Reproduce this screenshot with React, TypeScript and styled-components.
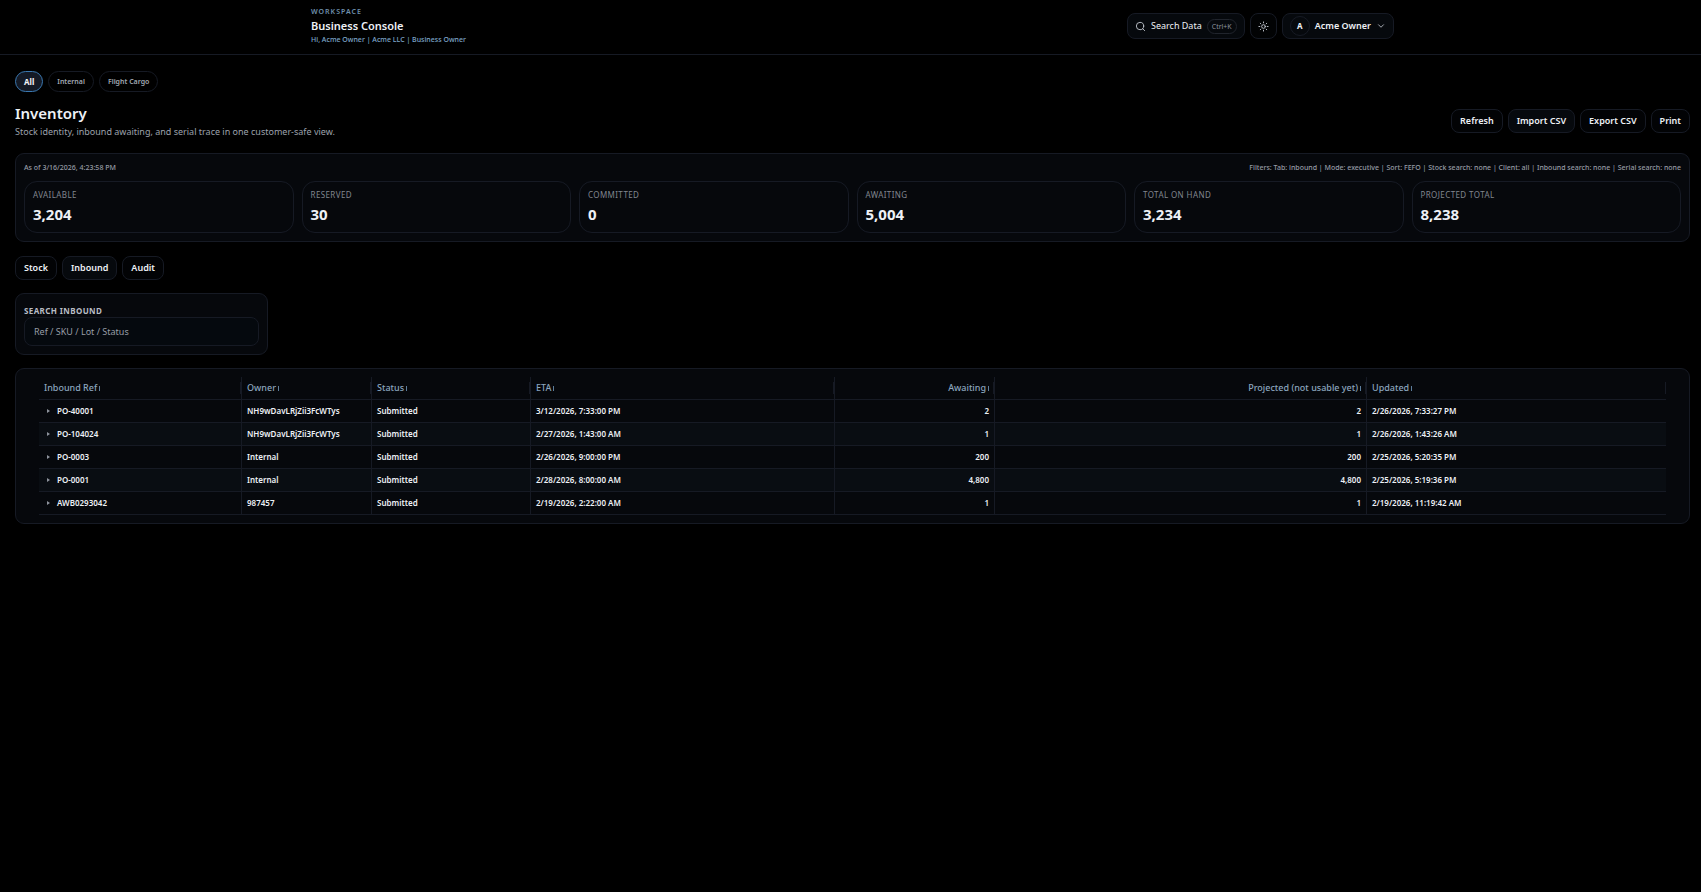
import React from "react";
import styled, { createGlobalStyle } from "styled-components";

const line = "#161a24";
const surface = "#06080c";

const GlobalStyle = createGlobalStyle`
  *, *::before, *::after { box-sizing: border-box; }
  body {
    margin: 0;
    background: #000;
    color: #eef1f6;
    font-family: "Noto Sans", sans-serif;
    font-size: 9px;
    line-height: 12px;
  }
  button, input { font: inherit; color: inherit; margin: 0; }
  h1, h2, p { margin: 0; }
`;

const Header = styled.header`
  padding: 0 0 0 4px;
  border-bottom: 1px solid ${line};
`;

const HeaderInner = styled.div`
  display: flex;
  align-items: center;
  justify-content: space-between;
  max-width: 1083px;
  height: 54px;
  margin: 0 auto;
  padding-bottom: 2px;
`;

const Eyebrow = styled.p`
  color: #6f90ad;
  font-size: 7px;
  font-weight: 600;
  letter-spacing: 1px;
  text-transform: uppercase;
`;

const ConsoleTitle = styled.h2`
  font-size: 11px;
  line-height: 16px;
  font-weight: 600;
`;

const Greeting = styled.p`
  color: #7da6ca;
  font-size: 7px;
  font-weight: 500;
`;

const HeaderTools = styled.div`
  display: flex;
  gap: 5px;
`;

const HeaderButton = styled.button<{ $plain?: boolean }>`
  display: flex;
  align-items: center;
  gap: 5px;
  min-width: 27px;
  height: 26px;
  padding: 0 7px;
  border: 1px solid ${line};
  border-radius: 8px;
  background: ${(p) => (p.$plain ? "#020304" : "#06090d")};
  justify-content: center;
`;

const Kbd = styled.kbd`
  padding: 0 4px;
  border: 1px solid #20242c;
  border-radius: 8px;
  color: #8b919b;
  font: inherit;
  font-size: 7px;
  line-height: 13px;
`;

const Avatar = styled.span`
  width: 20px;
  height: 20px;
  border: 1px solid ${line};
  border-radius: 50%;
  font-size: 8px;
  line-height: 18px;
  font-weight: 700;
`;

const UserName = styled.span`
  font-weight: 600;
`;

const Main = styled.main`
  display: flex;
  flex-direction: column;
  padding: 16px 11px 0 15px;
`;

const Chips = styled.nav`
  display: flex;
  gap: 5px;
`;

const Chip = styled.button<{ $active?: boolean }>`
  height: 21px;
  padding: 0 8px;
  border: 1px solid ${(p) => (p.$active ? "#3a78b0" : line)};
  border-radius: 11px;
  background: ${(p) => (p.$active ? "#141a26" : "#000")};
  color: ${(p) => (p.$active ? "#f2f4f8" : "#a2a8b2")};
  font-size: ${(p) => (p.$active ? "8px" : "7px")};
  line-height: 10px;
  font-weight: ${(p) => (p.$active ? 700 : 600)};
`;

const TitleRow = styled.div`
  display: flex;
  align-items: center;
  justify-content: space-between;
  margin: 10px 0 13px;
`;

const PageTitle = styled.h1`
  font-size: 15px;
  line-height: 22px;
  font-weight: 600;
`;

const Subtitle = styled.p`
  color: #9da2ac;
  line-height: 16px;
`;

const ButtonRow = styled.div`
  display: flex;
  gap: 5px;
`;

const Button = styled.button<{ $active?: boolean }>`
  height: 24px;
  padding: 0 8px;
  border: 1px solid ${line};
  border-radius: 8px;
  background: ${(p) => (p.$active ? "#06090d" : "#020305")};
  font-weight: 600;
`;

const Panel = styled.section`
  padding: 8px;
  border: 1px solid ${line};
  border-radius: 9px;
  background: ${surface};
`;

const SummaryMeta = styled.div`
  display: flex;
  justify-content: space-between;
  margin-bottom: 7px;
  color: #979ca6;
  font-size: 7px;
  font-weight: 500;
`;

const Stats = styled.dl`
  display: grid;
  grid-template-columns: repeat(6, 1fr);
  gap: 8px;
  margin: 0;
`;

const Stat = styled.div`
  height: 52px;
  padding: 7px 8px;
  border: 1px solid ${line};
  border-radius: 13px;
`;

const StatLabel = styled.dt`
  color: #81868f;
  font-size: 8px;
  letter-spacing: 0.4px;
  text-transform: uppercase;
`;

const StatValue = styled.dd`
  margin: 0;
  font-size: 15px;
  line-height: 26px;
  font-weight: 700;
`;

const Tabs = styled(ButtonRow)`
  margin: 14px 0 13px;
`;

const SearchPanel = styled(Panel)`
  width: 253px;
  height: 62px;
  margin-bottom: 13px;
`;

const SearchLabel = styled.label`
  display: block;
  margin-top: 3px;
  color: #b9bdc5;
  font-size: 8px;
  font-weight: 700;
  letter-spacing: 0.4px;
  text-transform: uppercase;
`;

const SearchInput = styled.input`
  display: block;
  width: 100%;
  height: 29px;
  padding: 0 9px;
  border: 1px solid ${line};
  border-radius: 8px;
  background: #05090e;
  &::placeholder { color: #989da6; opacity: 1; }
`;

const TablePanel = styled(Panel)`
  padding: 8px 23px;
`;

const Table = styled.table`
  width: 100%;
  table-layout: fixed;
  border-collapse: separate;
  border-spacing: 0;
`;

const HeadCell = styled.th<{ $right?: boolean }>`
  height: 23px;
  padding: 0 5px;
  border-bottom: 1px solid ${line};
  border-right: 1px solid ${line};
  color: #8ba5be;
  font-weight: 500;
  text-align: ${(p) => (p.$right ? "right" : "left")};
  background: linear-gradient(${line}, ${line}) right 5px / 1px 12px no-repeat;
  &:last-child { border-right: 0; }
`;

const SortMark = styled.span`
  display: inline-block;
  width: 1px;
  height: 5px;
  margin-left: 2px;
  background: #5c7d9c;
`;

const Row = styled.tr`
  &:nth-child(even) { background: #090d12; }
`;

const Cell = styled.td<{ $right?: boolean }>`
  height: 23px;
  padding: 0 5px;
  border-bottom: 1px solid ${line};
  border-right: 1px solid ${line};
  font-size: 8px;
  font-weight: 600;
  text-align: ${(p) => (p.$right ? "right" : "left")};
  &:last-child { border-right: 0; }
`;

const RefToggle = styled.button`
  display: flex;
  align-items: center;
  gap: 7px;
  padding: 0 3px;
  border: 0;
  background: none;
`;

const columns = [
  { name: "Inbound Ref", width: 203 },
  { name: "Owner", width: 130 },
  { name: "Status", width: 159 },
  { name: "ETA", width: 304 },
  { name: "Awaiting", width: 160, right: true },
  { name: "Projected (not usable yet)", width: 372, right: true },
  { name: "Updated", width: 299 },
];

const rows = [
  ["PO-40001", "NH9wDavLRjZii3FcWTys", "Submitted", "3/12/2026, 7:33:00 PM", "2", "2", "2/26/2026, 7:33:27 PM"],
  ["PO-104024", "NH9wDavLRjZii3FcWTys", "Submitted", "2/27/2026, 1:43:00 AM", "1", "1", "2/26/2026, 1:43:26 AM"],
  ["PO-0003", "Internal", "Submitted", "2/26/2026, 9:00:00 PM", "200", "200", "2/25/2026, 5:20:35 PM"],
  ["PO-0001", "Internal", "Submitted", "2/28/2026, 8:00:00 AM", "4,800", "4,800", "2/25/2026, 5:19:36 PM"],
  ["AWB0293042", "987457", "Submitted", "2/19/2026, 2:22:00 AM", "1", "1", "2/19/2026, 11:19:42 AM"],
];

const stats = [
  ["Available", "3,204"],
  ["Reserved", "30"],
  ["Committed", "0"],
  ["Awaiting", "5,004"],
  ["Total on hand", "3,234"],
  ["Projected total", "8,238"],
];

const Icon = styled.svg.attrs({
  viewBox: "0 0 24 24",
  fill: "none",
  stroke: "currentColor",
  strokeWidth: 2,
  strokeLinecap: "round",
  strokeLinejoin: "round",
  "aria-hidden": true,
})`
  flex: none;
  color: #c3c8d0;
`;

export default function App() {
  return (
    <>
      <GlobalStyle />
      <Header>
        <HeaderInner>
          <div>
            <Eyebrow>Workspace</Eyebrow>
            <ConsoleTitle>Business Console</ConsoleTitle>
            <Greeting>Hi, Acme Owner | Acme LLC | Business Owner</Greeting>
          </div>
          <HeaderTools>
            <HeaderButton>
              <Icon width={11} height={11}>
                <circle cx="11" cy="11" r="8" />
                <path d="m21 21-4.3-4.3" />
              </Icon>
              <span>Search Data</span>
              <Kbd>Ctrl+K</Kbd>
            </HeaderButton>
            <HeaderButton $plain aria-label="Toggle theme">
              <Icon width={11} height={11}>
                <circle cx="12" cy="12" r="4" />
                <path d="M12 2v2M12 20v2M4.9 4.9l1.4 1.4M17.7 17.7l1.4 1.4M2 12h2M20 12h2M6.3 17.7l-1.4 1.4M19.1 4.9l-1.4 1.4" />
              </Icon>
            </HeaderButton>
            <HeaderButton>
              <Avatar>A</Avatar>
              <UserName>Acme Owner</UserName>
              <Icon width={10} height={10}>
                <path d="m6 9 6 6 6-6" />
              </Icon>
            </HeaderButton>
          </HeaderTools>
        </HeaderInner>
      </Header>
      <Main>
        <Chips>
          <Chip $active>All</Chip>
          <Chip>Internal</Chip>
          <Chip>Flight Cargo</Chip>
        </Chips>
        <TitleRow>
          <div>
            <PageTitle>Inventory</PageTitle>
            <Subtitle>Stock identity, inbound awaiting, and serial trace in one customer-safe view.</Subtitle>
          </div>
          <ButtonRow>
            <Button>Refresh</Button>
            <Button $active>Import CSV</Button>
            <Button>Export CSV</Button>
            <Button>Print</Button>
          </ButtonRow>
        </TitleRow>
        <Panel>
          <SummaryMeta>
            <span>As of 3/16/2026, 4:23:58 PM</span>
            <span>
              Filters: Tab: inbound | Mode: executive | Sort: FEFO | Stock search: none | Client: all | Inbound search:
              none | Serial search: none
            </span>
          </SummaryMeta>
          <Stats>
            {stats.map(([label, value]) => (
              <Stat key={label}>
                <StatLabel>{label}</StatLabel>
                <StatValue>{value}</StatValue>
              </Stat>
            ))}
          </Stats>
        </Panel>
        <Tabs>
          <Button>Stock</Button>
          <Button $active>Inbound</Button>
          <Button>Audit</Button>
        </Tabs>
        <SearchPanel>
          <SearchLabel htmlFor="inbound-search">Search inbound</SearchLabel>
          <SearchInput id="inbound-search" placeholder="Ref / SKU / Lot / Status" />
        </SearchPanel>
        <TablePanel>
          <Table>
            <colgroup>
              {columns.map((c) => (
                <col key={c.name} width={c.width} />
              ))}
            </colgroup>
            <thead>
              <tr>
                {columns.map((c) => (
                  <HeadCell key={c.name} $right={c.right} scope="col">
                    {c.name}
                    <SortMark />
                  </HeadCell>
                ))}
              </tr>
            </thead>
            <tbody>
              {rows.map((row) => (
                <Row key={row[0]}>
                  {row.map((value, i) => (
                    <Cell key={columns[i].name} $right={columns[i].right}>
                      {i === 0 ? (
                        <RefToggle>
                          <svg width="3" height="4" viewBox="0 0 3 4" aria-hidden="true">
                            <path d="M0 0 3 2 0 4Z" fill="#8d929c" />
                          </svg>
                          {value}
                        </RefToggle>
                      ) : (
                        value
                      )}
                    </Cell>
                  ))}
                </Row>
              ))}
            </tbody>
          </Table>
        </TablePanel>
      </Main>
    </>
  );
}
